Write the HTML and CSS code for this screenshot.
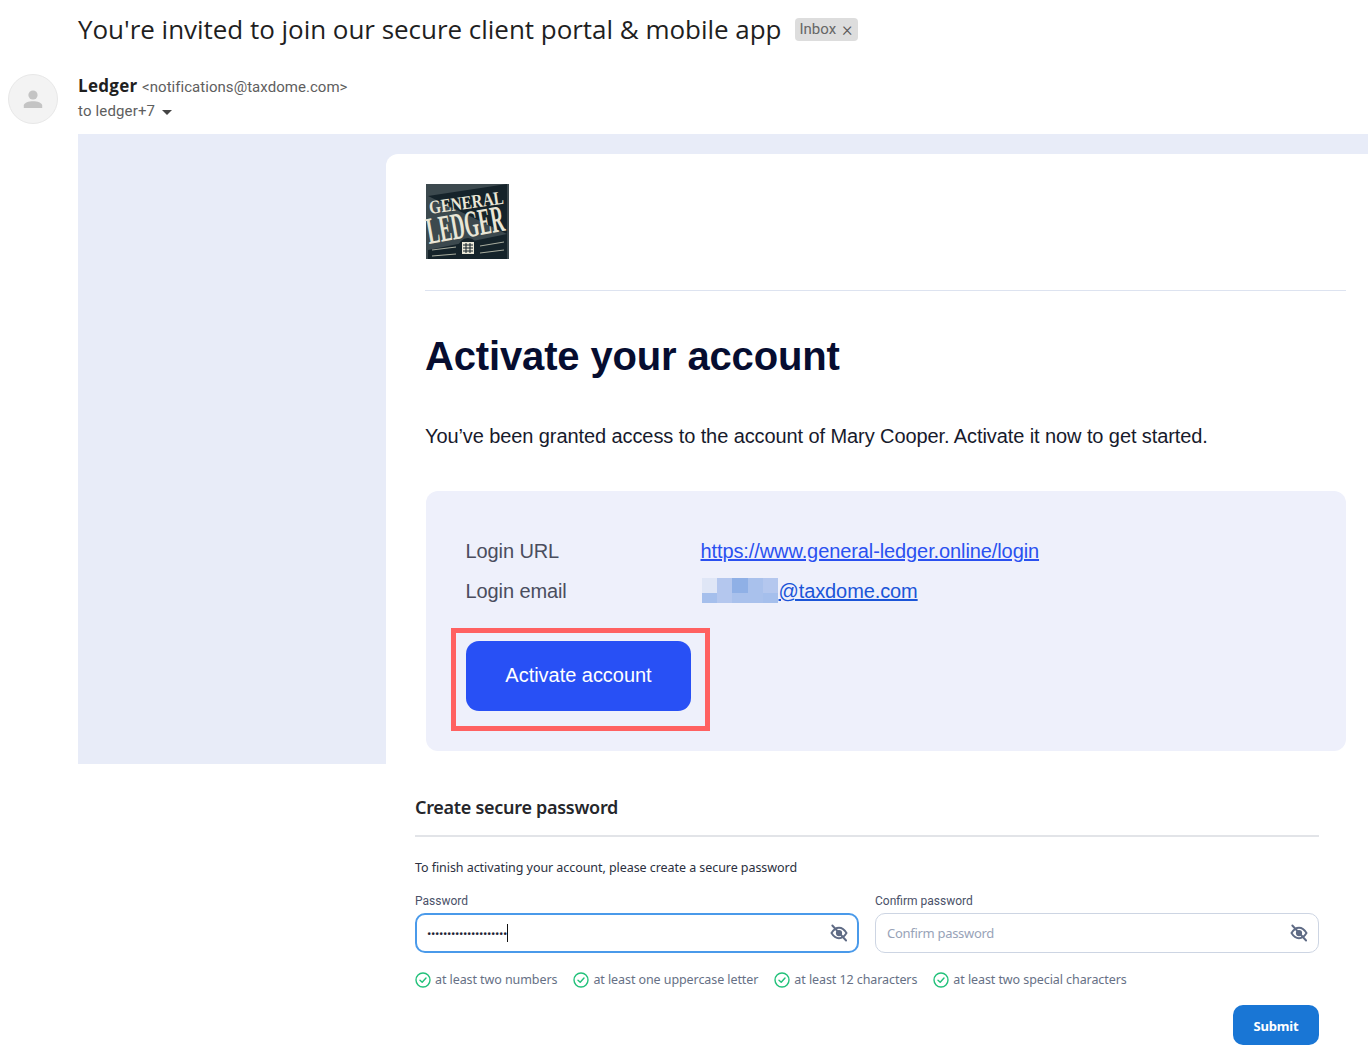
FILE: index.html
```html
<!DOCTYPE html>
<html lang="en">
<head>
<meta charset="utf-8">
<title>Activate your account</title>
<link rel="stylesheet" href="styles.css">
</head>
<body>
<header class="subject">
  <h1 class="subject-title">You're invited to join our secure client portal &amp; mobile app</h1>
  <span class="label">Inbox <span class="label-x">×</span></span>
</header>
<section class="sender">
  <div class="avatar">
    <svg width="24" height="24" viewBox="0 0 24 24"><circle cx="12" cy="8" r="4.6" fill="#c4c4c4"/><path d="M2.8 21v-2.4c0-3 5-4.4 9.2-4.4s9.2 1.4 9.2 4.4V21z" fill="#c4c4c4"/></svg>
  </div>
  <div class="sender-meta">
    <div class="sender-line"><strong class="sender-name">Ledger</strong> <span class="sender-mail">&lt;notifications@taxdome.com&gt;</span></div>
    <div class="to-line">to ledger+7 <span class="caret"></span></div>
  </div>
</section>
<main class="mail-bg">
  <div class="card">
    <div class="logo-row">
      <svg class="logo" width="83" height="75" viewBox="0 0 83 75">
        <rect width="83" height="75" fill="#3c494e"/>
        <path d="M2 12 81 0V50L42 58 2 66V75H81V50" fill="#15232a"/>
        <g fill="#e9e6d6" font-family="'Liberation Serif',serif" font-weight="700">
          <text transform="translate(4 30) rotate(-8)" font-size="19" textLength="75" lengthAdjust="spacingAndGlyphs">GENERAL</text>
          <text transform="translate(3 60) rotate(-10)" font-size="38" textLength="78" lengthAdjust="spacingAndGlyphs">LEDGER</text>
        </g>
        <circle cx="42" cy="64" r="10" fill="#15232a"/>
        <rect x="36" y="58" width="12" height="12" fill="#e9e6d6"/>
        <path d="M37 61h10M37 64h10M37 67h10M40 59v10M44 59v10" stroke="#15232a" stroke-width="1"/>
        <path d="M6 66 30 63M6 72 30 70M54 62 78 58M54 69 78 66" stroke="#a9ad9f" stroke-width="1"/>
      </svg>
    </div>
    <h2 class="headline">Activate your account</h2>
    <p class="lead">You’ve been granted access to the account of Mary Cooper. Activate it now to get started.</p>
    <div class="login-box">
      <div class="login-row">
        <span class="login-key">Login URL</span>
        <a class="login-val" href="#">https://www.general-ledger.online/login</a>
      </div>
      <div class="login-row">
        <span class="login-key">Login email</span>
        <a class="login-val email" href="#"><span class="pixels"><i class="p1"></i><i class="p2"></i><i class="p3"></i><i class="p4"></i><i class="p5"></i><i class="p6"></i><i class="p7"></i><i class="p8"></i><i class="p9"></i><i class="p10"></i></span>@taxdome.com</a>
      </div>
      <div class="activate-wrap">
        <a class="activate" href="#">Activate account</a>
      </div>
    </div>
  </div>
</main>
<section class="form">
  <h3 class="form-title">Create secure password</h3>
  <p class="form-text">To finish activating your account, please create a secure password</p>
  <div class="fields">
    <div class="field">
      <label class="field-label">Password</label>
      <div class="input focus">
        <span class="dots">••••••••••••••••••••</span><span class="cursor"></span>
        <svg class="eye" width="20" height="20" viewBox="0 0 24 24" fill="none" stroke="#5f6b85" stroke-width="2.300" stroke-linecap="round"><path d="M3 12c2.500-4.200 5.500-6.300 9-6.300s6.500 2.100 9 6.300c-2.500 4.200-5.500 6.300-9 6.300S5.500 16.200 3 12z"/><circle cx="12" cy="12" r="2.600" fill="#5f6b85"/><path d="M4 3l16.500 18"/></svg>
      </div>
    </div>
    <div class="field">
      <label class="field-label">Confirm password</label>
      <div class="input">
        <span class="placeholder">Confirm password</span>
        <svg class="eye" width="20" height="20" viewBox="0 0 24 24" fill="none" stroke="#5f6b85" stroke-width="2.300" stroke-linecap="round"><path d="M3 12c2.500-4.200 5.500-6.300 9-6.300s6.500 2.100 9 6.300c-2.500 4.200-5.500 6.300-9 6.300S5.500 16.200 3 12z"/><circle cx="12" cy="12" r="2.600" fill="#5f6b85"/><path d="M4 3l16.500 18"/></svg>
      </div>
    </div>
  </div>
  <ul class="rules">
    <li class="rule"><svg width="16" height="16" viewBox="0 0 16 16" fill="none" stroke="#22c17a" stroke-width="1.400"><circle cx="8" cy="8" r="7"/><path d="M5 8.200 7.200 10.300 11 6" stroke-linecap="round" stroke-linejoin="round"/></svg>at least two numbers</li>
    <li class="rule"><svg width="16" height="16" viewBox="0 0 16 16" fill="none" stroke="#22c17a" stroke-width="1.400"><circle cx="8" cy="8" r="7"/><path d="M5 8.200 7.200 10.300 11 6" stroke-linecap="round" stroke-linejoin="round"/></svg>at least one uppercase letter</li>
    <li class="rule"><svg width="16" height="16" viewBox="0 0 16 16" fill="none" stroke="#22c17a" stroke-width="1.400"><circle cx="8" cy="8" r="7"/><path d="M5 8.200 7.200 10.300 11 6" stroke-linecap="round" stroke-linejoin="round"/></svg>at least 12 characters</li>
    <li class="rule"><svg width="16" height="16" viewBox="0 0 16 16" fill="none" stroke="#22c17a" stroke-width="1.400"><circle cx="8" cy="8" r="7"/><path d="M5 8.200 7.200 10.300 11 6" stroke-linecap="round" stroke-linejoin="round"/></svg>at least two special characters</li>
  </ul>
  <div class="actions"><button class="submit" type="button">Submit</button></div>
</section>
</body>
</html>
```
FILE: styles.css
```css
*, *::after { box-sizing: border-box; }
html, body { margin: 0; padding: 0; }
body {
  background: #fff;
  width: 1368px;
  height: 1061px;
  overflow: hidden;
  font-family: "Liberation Sans", Arial, sans-serif;
}
.subject {
  display: flex;
  align-items: center;
  gap: 14px;
  height: 60px;
  padding-left: 78px;
}
.subject-title {
  margin: -2px 0 0;
  font: 400 26px/36px "Open Sans", sans-serif;
  letter-spacing: -0.03px;
  color: #1f1f1f;
  white-space: nowrap;
}
.label {
  display: flex;
  align-items: center;
  height: 23px;
  padding: 0 5px 0 4px;
  gap: 6px;
  border-radius: 4px;
  background: #dddddd;
  color: #666;
  font: 400 15px/22px "Roboto", sans-serif;
  margin-top: -2px;
}
.label-x { font-weight: 300; font-size: 20px; line-height: 22px; color: #555; }
.sender {
  display: flex;
  height: 74px;
  padding: 14px 0 0 8px;
  gap: 20px;
}
.avatar {
  width: 50px;
  height: 50px;
  border-radius: 50%;
  background: #f3f3f3;
  border: 1px solid #e8e8e8;
  display: flex;
  align-items: center;
  justify-content: center;
  flex: none;
}
.sender-line { font: 400 14px/20px "Roboto", sans-serif; margin-top: 2px; white-space: nowrap; }
.sender-name { font: 700 17px/20px "Open Sans", sans-serif; letter-spacing: 0.3px; margin-right: 1px; color: #1f1f1f; }
.sender-mail { font-size: 15px; letter-spacing: 0.04px; color: #5e5e5e; }
.to-line { font: 400 15px/20px "Roboto", sans-serif; letter-spacing: 0.15px; color: #5e5e5e; margin-top: 4px; display: flex; align-items: center; gap: 7px; }
.caret { width: 0; height: 0; border-left: 5px solid transparent; border-right: 5px solid transparent; border-top: 5px solid #444; margin-top: 2px; }
.mail-bg {
  height: 630px;
  margin-left: 78px;
  padding: 20px 0 0 308px;
  background: #e8ecf8;
}
.card {
  background: #fff;
  border-radius: 12px 0 0 0;
  height: 610px;
  padding: 30px 22px 0 39px;
}
.logo-row { border-bottom: 1px solid #dde3f0; height: 107px; }
.logo { display: block; margin-left: 1px; overflow: visible; }
.headline {
  margin: 41px 0 0;
  font: 700 40px/48px "Liberation Sans", Arial, sans-serif;
  letter-spacing: -0.15px;
  color: #060d30;
  white-space: nowrap;
}
.lead {
  margin: 42px 0 0;
  font-size: 20px;
  line-height: 28px;
  letter-spacing: -0.09px;
  color: #171a2c;
  white-space: nowrap;
}
.login-box {
  margin: 41px 0 0 1px;
  height: 260px;
  padding: 40px 40px 40px 39.500px;
  border-radius: 12px;
  background: #eef0fb;
}
.login-row { display: flex; height: 40px; font-size: 20px; line-height: 40px; letter-spacing: -0.1px; color: #4a4d5e; }
.login-key { width: 235px; }
.login-val { color: #2a50f0; text-decoration: underline; }
.email { color: #1b55d8; display: flex; }
.pixels {
  display: grid;
  grid-template-columns: repeat(5, 15.400px);
  grid-template-rows: 15px 10px;
  width: 77px;
  height: 25px;
  margin: 7px 0 0 1px;
}
.p1 { background: #dfe6f6; }
.p2 { background: #b4c7ee; }
.p3 { background: #8fb0e6; }
.p4 { background: #a9c1ec; }
.p5 { background: #b4c7ee; }
.p6 { background: #a5bfec; }
.p7 { background: #b4c7ee; }
.p8 { background: #a9c1ec; }
.p9 { background: #a9c1ec; }
.p10 { background: #a5bfec; }
.activate-wrap { position: relative; margin-top: 30px; margin-left: 0.5px; }
.activate-wrap::after {
  content: "";
  position: absolute;
  left: -15px;
  top: -13px;
  width: 259px;
  height: 103px;
  border: 5px solid #ff6161;
  pointer-events: none;
}
.activate {
  display: flex;
  align-items: center;
  justify-content: center;
  width: 225px;
  height: 70px;
  padding-bottom: 2px;
  border-radius: 13px;
  background: #2850f5;
  color: #fff;
  font-size: 20px;
  letter-spacing: -0.03px;
  text-decoration: none;
}
.form { margin-left: 415px; width: 904px; font-family: "Noto Sans", sans-serif; }
.form-title {
  margin: 0;
  padding: 31px 0 16px;
  height: 73px;
  border-bottom: 2px solid #e2e4e8;
  font: 600 18px/24px "Noto Sans", sans-serif;
  letter-spacing: -0.29px;
  color: #25262b;
}
.form-text { margin: 22px 0 0; font-size: 12.500px; line-height: 18px; letter-spacing: -0.06px; color: #2b3040; }
.fields { display: flex; gap: 16px; margin-top: 16px; }
.field { flex: 1; }
.field-label { display: block; font: 400 12px/16px "Roboto", sans-serif; color: #4a5168; }
.input {
  position: relative;
  display: flex;
  align-items: center;
  height: 40px;
  margin-top: 4px;
  padding: 0 11px;
  border: 1px solid #cdd5e3;
  border-radius: 10px;
  font-size: 13px;
}
.input.focus { border: 2px solid #4a9aea; padding: 0 10px; }
.dots { font-size: 11.500px; letter-spacing: -0.32px; color: #1c2233; }
.cursor { width: 1px; height: 18px; background: #111; }
.placeholder { color: #98a3b8; letter-spacing: -0.3px; }
.eye { position: absolute; right: 9px; top: 9px; }
.focus .eye { right: 8px; top: 8px; }
.rules { display: flex; gap: 16px; list-style: none; margin: 19px 0 0; padding: 0; }
.rule { display: flex; align-items: center; gap: 4px; font-size: 12.500px; line-height: 16px; letter-spacing: -0.08px; color: #667085; white-space: nowrap; }
.actions { display: flex; justify-content: flex-end; margin-top: 17px; }
.submit {
  width: 86px;
  height: 40px;
  border: 0;
  border-radius: 10px;
  background: #1976d5;
  color: #fff;
  font: 700 13px/40px "Noto Sans", sans-serif;
  letter-spacing: -0.2px;
}
```
